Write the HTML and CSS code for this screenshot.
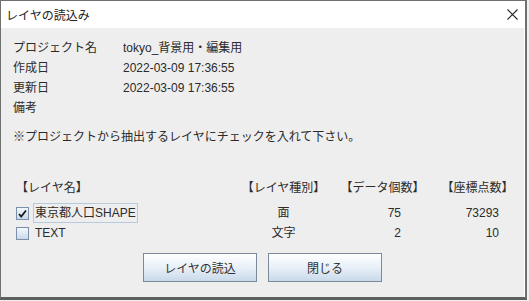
FILE: index.html
```html
<!DOCTYPE html>
<html lang="ja">
<head>
    <meta charset="UTF-8">
    <title>レイヤの読込み</title>
    <link rel="stylesheet" href="styles.css">
</head>
<body>
    <div class="window">
        <div class="titlebar">
            <span class="title">レイヤの読込み</span>
            <svg class="close" width="11" height="11" viewBox="0 0 11 11">
                <path d="M0.5 0.5 L10.5 10.5 M10.5 0.5 L0.5 10.5" stroke="#222" stroke-width="1.1" fill="none"/>
            </svg>
        </div>
        <div class="panel">
            <div class="info">
                <div class="info-label">プロジェクト名</div>
                <div class="info-value">tokyo_背景用・編集用</div>
                <div class="info-label">作成日</div>
                <div class="info-value">2022-03-09 17:36:55</div>
                <div class="info-label">更新日</div>
                <div class="info-value">2022-03-09 17:36:55</div>
                <div class="info-label">備考</div>
                <div class="info-value"></div>
            </div>
            <div class="note">※プロジェクトから抽出するレイヤにチェックを入れて下さい。</div>

            <div class="layers">
                <div class="head name-col">【レイヤ名】</div>
                <div class="head">【レイヤ種別】</div>
                <div class="head">【データ個数】</div>
                <div class="head">【座標点数】</div>

                <div class="cell name-col">
                    <span class="check checked">
                        <svg width="9" height="9" viewBox="0 0 9 9">
                            <path d="M1 5 L3.2 7.5 L8 1.5" stroke="#1a1a1a" stroke-width="1.8" fill="none"/>
                        </svg>
                    </span>
                    <span class="layer-name focused">東京都人口SHAPE</span>
                </div>
                <div class="cell type">面</div>
                <div class="cell count">75</div>
                <div class="cell points">73293</div>

                <div class="cell name-col">
                    <span class="check"></span>
                    <span class="layer-name">TEXT</span>
                </div>
                <div class="cell type">文字</div>
                <div class="cell count">2</div>
                <div class="cell points">10</div>
            </div>

            <div class="buttons">
                <button class="btn">レイヤの読込</button>
                <button class="btn">閉じる</button>
            </div>
        </div>
    </div>
</body>
</html>
```

FILE: styles.css
```css
body {
    margin: 0;
    background-color: #f0f0f0;
    font-family: "Liberation Sans", "Noto Sans CJK JP", sans-serif;
    font-size: 12px;
    color: #2b2b2b;
}
.window {
    width: 527px;
    height: 300px;
    box-sizing: border-box;
    border: 1px solid #707070;
    border-right-width: 2px;
    border-bottom: 3px solid #5e5e5e;
    display: flex;
    flex-direction: column;
    background-color: #ffffff;
}
.titlebar {
    height: 27px;
    flex-shrink: 0;
    display: flex;
    align-items: center;
    justify-content: space-between;
    padding: 0 7px 0 5px;
    background-color: #ffffff;
}
.title {
    color: #222;
}
.close {
    display: block;
    margin-top: -1px;
}
.panel {
    flex: 1;
    background-color: #eeeeee;
    margin-right: 1px;
}
.info {
    display: grid;
    grid-template-columns: 110px 1fr;
    margin: 10px 0 0 12px;
    line-height: 20px;
}
.note {
    margin: 9px 0 0 12px;
    line-height: 20px;
}
.layers {
    display: grid;
    grid-template-columns: 224px 87px 111px 79px;
    grid-template-rows: 25px 20px 20px;
    margin: 31px 0 0 15px;
    line-height: 20px;
}
.head {
    text-align: center;
}
.head.name-col {
    text-align: left;
    align-items: flex-start;
}
.cell {
    white-space: nowrap;
}
.name-col {
    display: flex;
    align-items: center;
}
.type {
    text-align: center;
}
.count {
    text-align: right;
    padding-right: 37px;
}
.points {
    text-align: right;
    padding-right: 18px;
}
.check {
    width: 11px;
    height: 11px;
    border: 1px solid #7b8fa8;
    background: linear-gradient(#f4f8fc, #c9d8ea);
    display: flex;
    align-items: center;
    justify-content: center;
    margin-right: 4px;
}
.layer-name {
    padding: 0 1px;
    line-height: 18px;
    border: 1px solid transparent;
}
.layer-name.focused {
    border-color: #b7c9dd;
}
.buttons {
    display: flex;
    justify-content: center;
    gap: 11px;
    margin-top: 10px;
}
.btn {
    width: 114px;
    height: 29px;
    border: 1px solid #7a8a9a;
    background: linear-gradient(#ffffff, #e6eef7 55%, #c9d9ea);
    font-family: "Liberation Sans", "Noto Sans CJK JP", sans-serif;
    font-size: 12px;
    color: #333;
    padding: 0;
}
```
